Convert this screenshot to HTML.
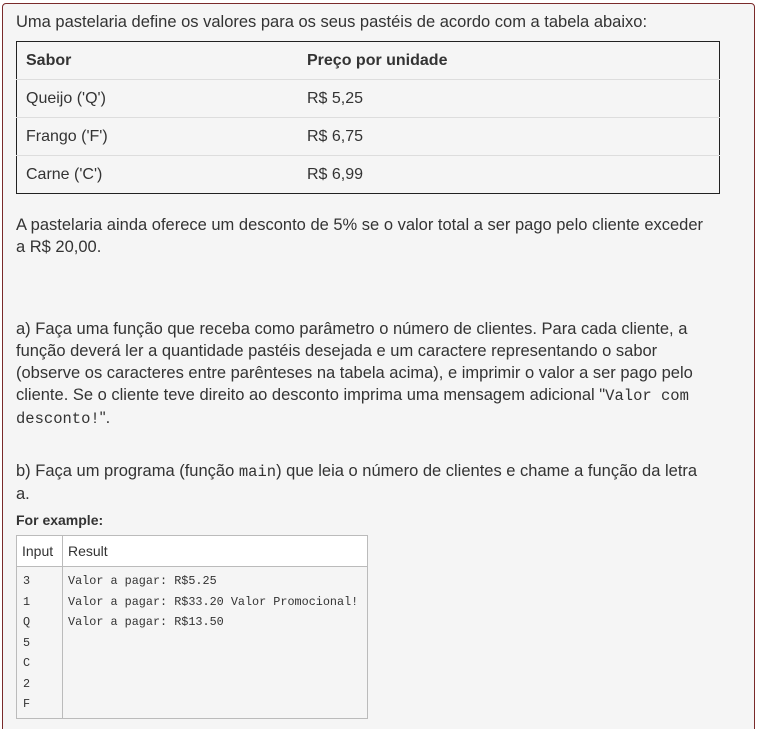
<!DOCTYPE html>
<html><head><meta charset="utf-8"><style>
html,body{margin:0;height:729px;overflow:hidden;}
body{background:#fff;font-family:"Liberation Sans",sans-serif;color:#333;position:relative;}
.box{position:absolute;left:2px;top:3px;width:751px;height:740px;border:1px solid #7a2a2a;border-radius:4px;background:#f5f5f5;}
.t{position:absolute;left:16px;font-size:16.5px;line-height:22px;white-space:nowrap;}
table.p{position:absolute;left:16px;top:41px;width:704px;border-collapse:collapse;border:1.5px solid #222;font-size:16px;}
table.p td{height:37px;border-top:1px solid #ddd;padding:0 0 0 9px;}
table.p tr:first-child td{font-weight:bold;border-top:none;}
code{font-family:"Liberation Mono",monospace;font-size:15.5px;}
.ex{position:absolute;left:16px;top:535px;width:350px;height:182px;border:1px solid #bbb;}
.ex .h{position:absolute;left:0;top:0;width:350px;height:30px;background:#fff;border-bottom:1px solid #bbb;font-size:14px;}
.ex .v{position:absolute;left:45px;top:0;bottom:0;border-left:1px solid #bbb;}
.m{position:absolute;font-family:"Liberation Mono",monospace;font-size:11.8px;line-height:20.5px;white-space:pre;color:#333;}
</style></head><body>
<div class="box"></div>
<div class="t" style="top:11px">Uma pastelaria define os valores para os seus pastéis de acordo com a tabela abaixo:</div>
<table class="p">
<tr><td style="width:272px">Sabor</td><td>Preço por unidade</td></tr>
<tr><td>Queijo ('Q')</td><td>R$ 5,25</td></tr>
<tr><td>Frango ('F')</td><td>R$ 6,75</td></tr>
<tr><td>Carne ('C')</td><td>R$ 6,99</td></tr>
</table>
<div class="t" style="top:214px">A pastelaria ainda oferece um desconto de 5% se o valor total a ser pago pelo cliente exceder<br>a R$ 20,00.</div>
<div class="t" style="top:318px">a) Faça uma função que receba como parâmetro o número de clientes. Para cada cliente, a<br>função deverá ler a quantidade pastéis desejada e um caractere representando o sabor<br>(observe os caracteres entre parênteses na tabela acima), e imprimir o valor a ser pago pelo<br>cliente. Se o cliente teve direito ao desconto imprima uma mensagem adicional "<code>Valor com</code><br><code>desconto!</code>".</div>
<div class="t" style="top:460px">b) Faça um programa (função <code>main</code>) que leia o número de clientes e chame a função da letra<br>a.</div>
<div class="t" style="top:509px;font-size:14px;font-weight:bold">For example:</div>
<div class="ex"><div class="h"><span style="position:absolute;left:5px;top:7px">Input</span><span style="position:absolute;left:51px;top:7px">Result</span></div><div class="v"></div>
<div class="m" style="left:6px;top:35px">3
1
Q
5
C
2
F</div>
<div class="m" style="left:51px;top:35px">Valor a pagar: R$5.25
Valor a pagar: R$33.20 Valor Promocional!
Valor a pagar: R$13.50</div>
</div>
</body></html>
